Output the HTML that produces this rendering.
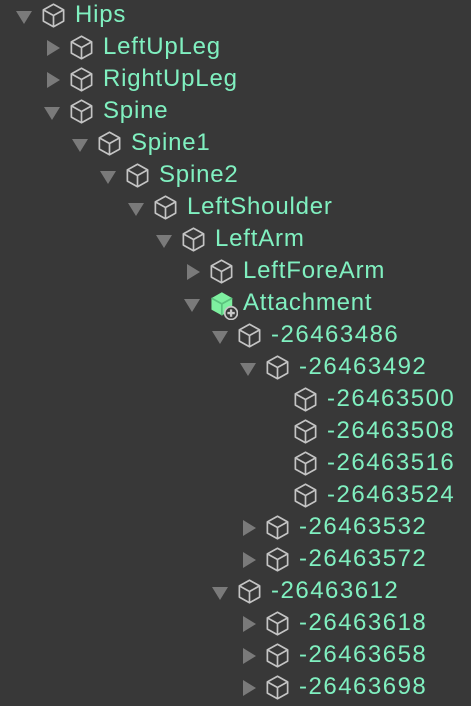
<!DOCTYPE html>
<html><head><style>
body{margin:0;width:471px;height:706px;background:#383838;overflow:hidden;font-family:"Liberation Sans",sans-serif;}
.r{position:absolute;height:32px;}
.t{position:absolute;top:0;line-height:32px;font-size:24px;letter-spacing:1.5px;color:#80f0c0;white-space:nowrap;}
.w{letter-spacing:0.8px;}
svg{position:absolute;}
</style></head><body>
<div id="c"></div>
<script>
var rows=[["Hips",0,"d"],["LeftUpLeg",1,"r"],["RightUpLeg",1,"r"],["Spine",1,"d"],["Spine1",2,"d"],["Spine2",3,"d"],["LeftShoulder",4,"d"],["LeftArm",5,"d"],["LeftForeArm",6,"r"],["Attachment",6,"d","g"],["-26463486",7,"d"],["-26463492",8,"d"],["-26463500",9,""],["-26463508",9,""],["-26463516",9,""],["-26463524",9,""],["-26463532",8,"r"],["-26463572",8,"r"],["-26463612",7,"d"],["-26463618",8,"r"],["-26463658",8,"r"],["-26463698",8,"r"]];
var h="";
rows.forEach(function(r,i){
 var y=i*32-1,x=r[1]*28;
 h+='<div class="r" style="top:'+y+'px;left:'+x+'px;width:440px">';
 if(r[2]=="d")h+='<svg style="left:15px;top:10px" width="18" height="16"><polygon points="1,2 17,2 9,15" fill="#7a7a7a"/></svg>';
 if(r[2]=="r")h+='<svg style="left:17px;top:8px" width="16" height="18"><polygon points="2,1 15,9 2,17" fill="#7a7a7a"/></svg>';
 if(r[3]=="g")h+='<svg style="left:40px;top:3px" width="30" height="30" viewBox="0 0 26 26"><polygon points="12,2 21,7 21,17 12,22 3,17 3,7" fill="#7ef0a0"/><polyline points="3,7 12,12 21,7" stroke="#5bc27e" fill="none" stroke-width="1.5"/><line x1="12" y1="12" x2="12" y2="22" stroke="#5bc27e" stroke-width="1.5"/><circle cx="20" cy="20" r="5.5" fill="#383838" stroke="#c8c8c8" stroke-width="1.5"/><path d="M20 16.8v6.4M16.8 20h6.4" stroke="#c8c8c8" stroke-width="2"/></svg>';
 else h+='<svg style="left:40px;top:3px" width="27" height="27" viewBox="0 0 24 24"><g fill="none" stroke="#c4c4c4" stroke-width="1.5" stroke-linejoin="round"><polygon points="12,2 21,7 21,17 12,22 3,17 3,7"/><polyline points="3,7 12,12 21,7"/><line x1="12" y1="12" x2="12" y2="22"/></g></svg>';
 var cls=r[0].charAt(0)=="-"?"t":"t w";
 h+='<div class="'+cls+'" style="left:75px">'+r[0]+'</div></div>';
});
document.getElementById("c").innerHTML=h;
</script>
</body></html>
